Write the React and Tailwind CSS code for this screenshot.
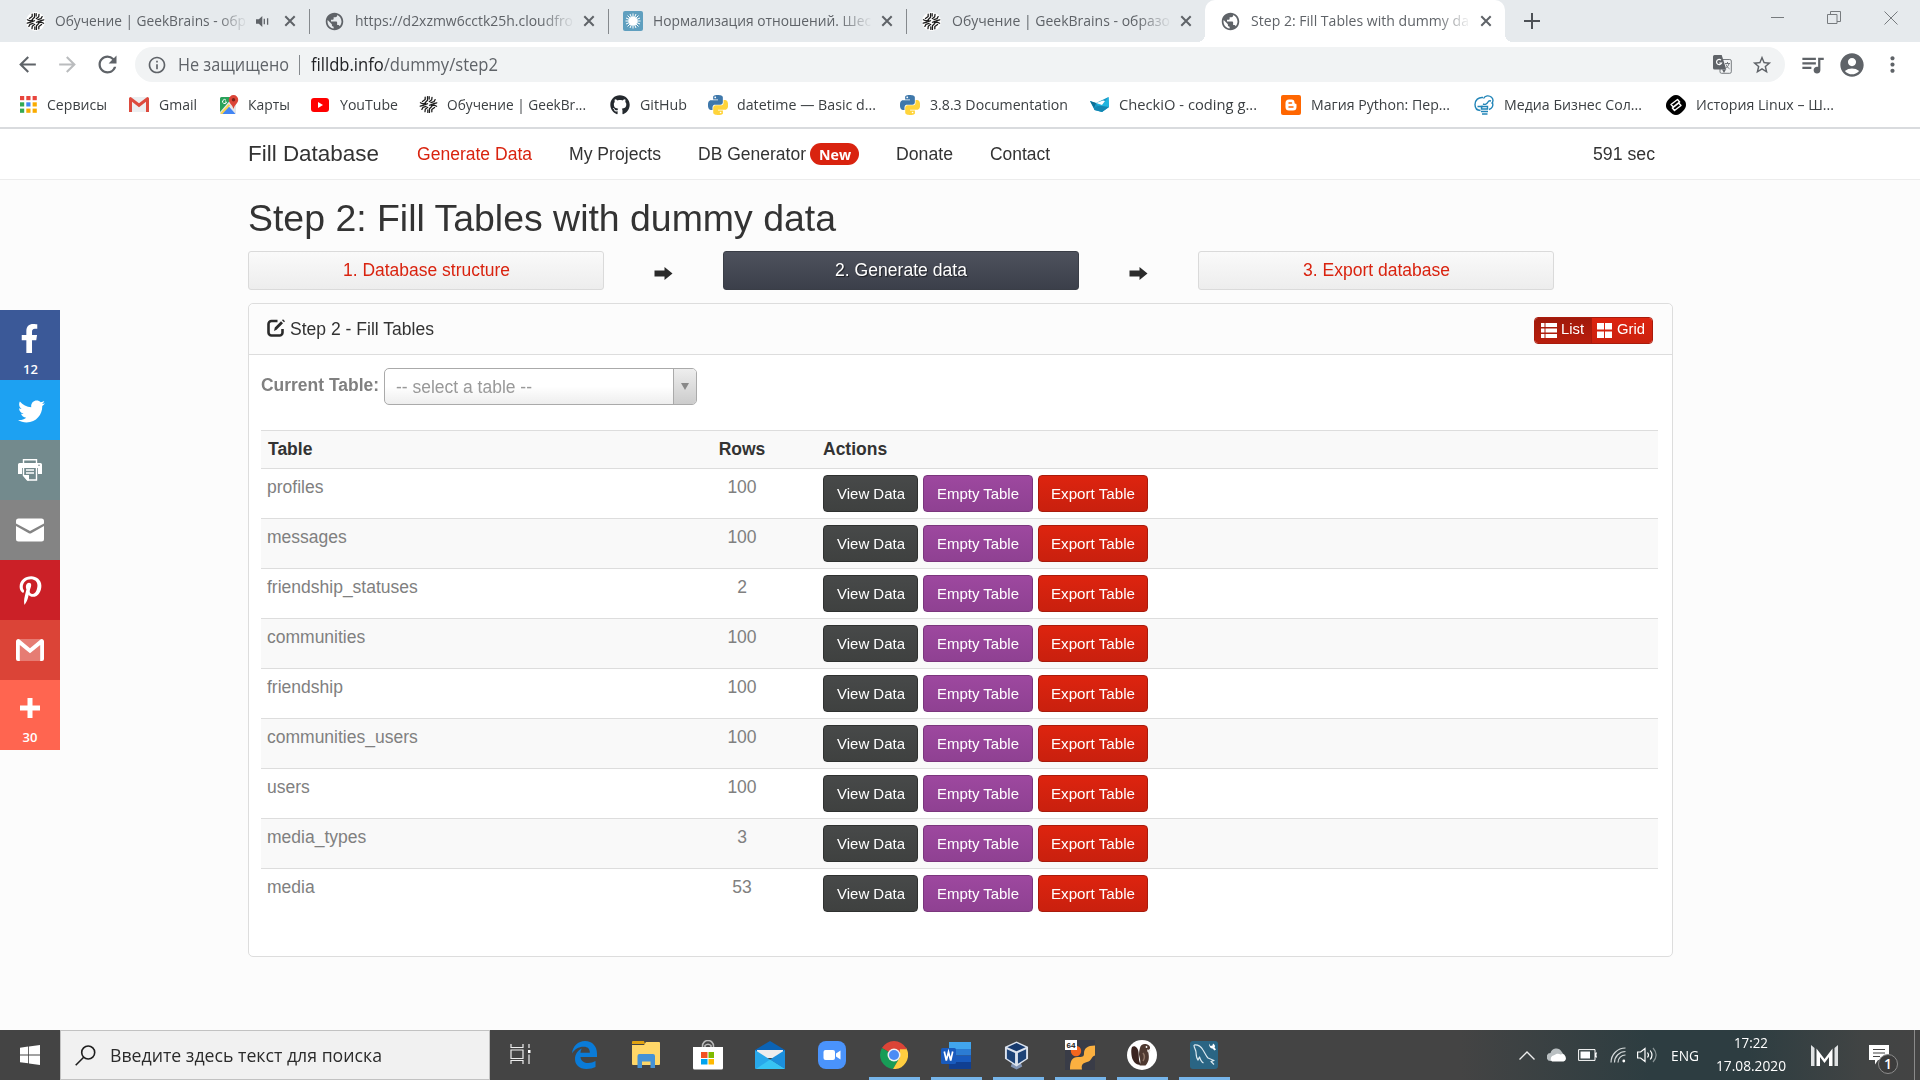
import React, { useLayoutEffect, useRef } from "react";
import { FaFacebookF, FaTwitter, FaPinterestP, FaGithub } from "react-icons/fa";
import { MdPublic, MdQueueMusic, MdAccountCircle, MdMoreVert, MdStarBorder, MdInfoOutline, MdArrowBack, MdArrowForward, MdRefresh } from "react-icons/md";

/* Single-line text condensed or widened to a given width. */
function Label({ w, className = "", children }) {
  const ref = useRef(null);
  useLayoutEffect(() => {
    const el = ref.current;
    el.style.transform = "none";
    const natural = el.getBoundingClientRect().width;
    el.style.transform = `scaleX(${w / natural})`;
  }, [w]);
  return (
    <span className={`block shrink-0 whitespace-nowrap ${className}`} style={{ width: w }}>
      <span ref={ref} className="inline-block origin-left">{children}</span>
    </span>
  );
}

function GeekBrains({ className = "" }) {
  return (
    <svg className={`shrink-0 ${className}`} width="19" height="19" viewBox="0 0 20 20">
      <circle cx="10" cy="10" r="10" fill="#fff" />
      <g fill="none" stroke="#1b1b1b" strokeWidth="1.35" strokeLinecap="round" strokeLinejoin="round">
        <path d="M9 1.600v4L6.600 7.800M6.500 2.300v2.500L3.600 6.800M1.500 8.200l2.600 1.200L7 8.500M1.300 11.800l3-.8L9 9.200M3 15.200l1.200-2.200L7.500 12M6.300 17.600l.3-2.600L9.200 13M9.300 15.800v2.600" />
        <path d="M11 18.400v-4l2.400-2.200M13.500 17.700v-2.500l2.900-2M18.500 11.800l-2.600-1.200-2.900.9M18.700 8.200l-3 .8L11 10.800M17 4.800L15.800 7l-3.300 1M13.700 2.400l-.3 2.600-2.600 2M10.700 4.200V1.600" />
      </g>
    </svg>
  );
}

function Python() {
  return (
    <svg className="shrink-0" width="20" height="20" viewBox="0 0 24 24">
      <path fill="#3f78ab" d="M14.25.18l.9.2.73.26.59.3.45.32.34.34.25.34.16.33.1.3.04.26.02.2-.01.13V8.5l-.05.63-.13.55-.21.46-.26.38-.3.31-.33.25-.35.19-.35.14-.33.1-.3.07-.26.04-.21.02H8.77l-.69.05-.59.14-.5.22-.41.27-.33.32-.27.35-.2.36-.15.37-.1.35-.07.32-.04.27-.02.21v3.06H3.17l-.21-.03-.28-.07-.32-.12-.35-.18-.36-.26-.36-.36-.35-.46-.32-.59-.28-.73-.21-.88-.14-1.05-.05-1.23.06-1.22.16-1.04.24-.87.32-.71.36-.57.4-.44.42-.33.42-.24.4-.16.36-.1.32-.05.24-.01h.16l.06.01h8.16v-.83H6.18l-.01-2.75-.02-.37.05-.34.11-.31.17-.28.25-.26.31-.23.38-.2.44-.18.51-.15.58-.12.64-.1.71-.06.77-.04.84-.02 1.27.05zm-6.3 1.98l-.23.33-.08.41.08.41.23.34.33.22.41.09.41-.09.33-.22.23-.34.08-.41-.08-.41-.23-.33-.33-.22-.41-.09-.41.09z" />
      <path fill="#ffd43b" d="M21.1 6.11l.28.06.32.12.35.18.36.27.36.35.35.47.32.59.28.73.21.88.14 1.04.05 1.23-.06 1.23-.16 1.04-.24.86-.32.71-.36.57-.4.45-.42.33-.42.24-.4.16-.36.09-.32.05-.24.02-.16-.01h-8.22v.82h5.84l.01 2.76.02.36-.05.34-.11.31-.17.29-.25.25-.31.24-.38.2-.44.17-.51.15-.58.13-.64.09-.71.07-.77.04-.84.01-1.27-.04-1.07-.14-.9-.2-.73-.25-.59-.3-.45-.33-.34-.34-.25-.34-.16-.33-.1-.3-.04-.25-.02-.2.01-.13v-5.34l.05-.64.13-.54.21-.46.26-.38.3-.32.33-.24.35-.2.35-.14.33-.1.3-.06.26-.04.21-.02.13-.01h5.84l.69-.05.59-.14.5-.21.41-.28.33-.32.27-.35.2-.36.15-.36.1-.35.07-.32.04-.28.02-.21V6.07h2.09z" />
      <circle cx="15.1" cy="21" r="1" fill="#fff" />
    </svg>
  );
}

function Close() {
  return (
    <svg className="shrink-0" width="12" height="12" viewBox="0 0 12 12" stroke="#5f6368" strokeWidth="2">
      <path d="M1.3 1.3l9.4 9.4M10.7 1.3L1.3 10.7" />
    </svg>
  );
}

function Sound() {
  return (
    <svg className="shrink-0" width="13" height="13" viewBox="0 0 13 13">
      <path d="M0 4.3h2.8L6.3 1v11L2.8 8.7H0z" fill="#5f6368" />
      <path d="M8.3 3.8v5.4M11.6 3.2v6.6" stroke="#5f6368" strokeWidth="1.3" />
    </svg>
  );
}

const globe = <MdPublic className="size-[21px] shrink-0 -mx-px text-[#5f6368]" />;
const habr = (
  <svg className="shrink-0" width="20" height="20" viewBox="0 0 20 20">
    <rect width="20" height="20" rx="2" fill="#5f9fbf" />
    <path d="M10 2.500v15M2.500 10h15M4.500 4.500l11 11M15.500 4.500l-11 11M7 3l6 14M13 3L7 17M3 7l14 6M17 7L3 13" stroke="#fff" strokeWidth="1" />
    <circle cx="10" cy="10" r="4.600" fill="#fff" />
  </svg>
);

const tabs = [
  { icon: <GeekBrains />, text: "Обучение | GeekBrains - обр", w: 191, cls: "w-[284px] ml-[26px]", sound: true, gap: "gap-[10px]" },
  { icon: globe, text: "https://d2xzmw6cctk25h.cloudfro", w: 218, cls: "w-[284px] ml-[15px]", gap: "gap-[11px]" },
  { icon: habr, text: "Нормализация отношений. Шес", w: 218, cls: "w-[284px] ml-[14px]", gap: "gap-[10px]" },
  { icon: <GeekBrains />, text: "Обучение | GeekBrains - образо", w: 218, cls: "w-[283px] ml-[15px] border-transparent", gap: "gap-[11px]" },
];

function Fade({ w, children }) {
  return (
    <Label w={w} className="-mt-[2px] text-[15px] leading-5 text-[#5f6368] [mask-image:linear-gradient(to_right,#000_85%,transparent_101%)]">
      {children}
    </Label>
  );
}

function TabStrip() {
  return (
    <div className="flex h-[42px] bg-[#e6eaed]">
      {tabs.map((t, i) => (
        <div key={i} className={`flex h-full shrink-0 items-center ${t.cls}`}>
          <div className={`flex items-center ${t.gap}`}>
            {t.icon}
            <Fade w={t.w}>{t.text}</Fade>
          </div>
          {t.sound && <span className="ml-[10px]"><Sound /></span>}
          <span className={t.sound ? "ml-[15px]" : "ml-[10px]"}><Close /></span>
          {i < 3 && <span className="ml-auto h-[25px] w-px bg-[#85898d]" />}
        </div>
      ))}
      <div className="relative flex h-full w-[300px] shrink-0 items-center rounded-t-[10px] bg-white pl-4">
        <span className="absolute -left-2 bottom-0 size-2 bg-[radial-gradient(circle_at_0_0,transparent_8px,#fff_8px)]" />
        <span className="absolute -right-2 bottom-0 size-2 bg-[radial-gradient(circle_at_100%_0,transparent_8px,#fff_8px)]" />
        <div className="flex items-center gap-[11px]">
          {globe}
          <Fade w={218}>Step 2: Fill Tables with dummy da</Fade>
        </div>
        <span className="ml-[11px]"><Close /></span>
      </div>
      <svg className="mt-[13px] ml-[19px] shrink-0" width="16" height="16" viewBox="0 0 16 16" stroke="#4d5156" strokeWidth="2"><path d="M8 0v16M0 8h16" /></svg>
      <div className="mr-[22px] ml-auto flex h-[35px] items-center gap-[43px]">
        <svg width="13" height="13" viewBox="0 0 13 13" stroke="#777b7e"><path d="M0 6.500h13" /></svg>
        <svg width="14" height="13" viewBox="0 0 14 13" fill="none" stroke="#777b7e"><path d="M.5 3.500h9.500v9H.5zM3.500 3.500v-3h10v10h-3.500" /></svg>
        <svg width="14" height="14" viewBox="0 0 14 14" stroke="#777b7e"><path d="M.5.5l13 13M13.500.5l-13 13" /></svg>
      </div>
    </div>
  );
}

function Toolbar() {
  return (
    <div className="flex h-[45px] items-center bg-white text-[#5f6368]">
      <MdArrowBack className="ml-[15px] size-[25px] shrink-0" />
      <MdArrowForward className="ml-[15px] size-[25px] shrink-0 text-[#babcbe]" />
      <MdRefresh className="ml-[14px] size-[27px] shrink-0" />
      <div className="ml-[14px] flex h-[35px] w-[1650px] shrink-0 items-center rounded-full bg-[#f1f3f4] text-[17.5px] leading-6">
        <MdInfoOutline className="ml-[12px] size-[20px] shrink-0" />
        <Label w={111} className="-mt-[2px] ml-[11px]">Не защищено</Label>
        <span className="ml-[10px] h-5 w-px bg-[#85898d]" />
        <Label w={187} className="-mt-[2px] ml-[11px]"><span className="text-[#202124]">filldb.info</span>/dummy/step2</Label>
        <svg className="ml-auto" width="19" height="19" viewBox="0 0 19 19">
          <rect x="7" y="4.500" width="11.300" height="13.800" rx="1.500" fill="#f1f3f4" stroke="#777b7f" />
          <path d="M1.500 0h7.200l4.600 14.500H1.500A1.500 1.500 0 0 1 0 13V1.500A1.500 1.500 0 0 1 1.500 0z" fill="#5f6368" />
          <path d="M8 5.100A2.600 2.600 0 1 0 8.600 8H6.200" fill="none" stroke="#fff" strokeWidth="1.200" />
          <path d="M12 8.500h5M14.500 7v1.500M16 8.500c-.5 2.500-2 4-4 5M13 9.500c.8 2 2 3.500 3.500 4.300" fill="none" stroke="#777b7f" />
          <path d="M9 14.500l2 3.500 2-3.500z" fill="#5f6368" />
        </svg>
        <MdStarBorder className="mr-[12px] ml-[19px] size-[22px]" />
      </div>
      <MdQueueMusic className="ml-[14px] size-[27px] shrink-0" />
      <MdAccountCircle className="ml-[12px] size-[28px] shrink-0" />
      <MdMoreVert className="ml-[14px] size-[25px] shrink-0" />
    </div>
  );
}

const appsGrid = (
  <svg className="shrink-0" width="17" height="17" viewBox="0 0 17 17">
    {["#e8453c", "#e8453c", "#e8453c", "#34a853", "#4285f4", "#f9ab00", "#34a853", "#f9ab00", "#f9ab00"].map((c, i) => (
      <rect key={i} x={(i % 3) * 6.300} y={Math.floor(i / 3) * 6.300} width="4.200" height="4.200" fill={c} />
    ))}
  </svg>
);
const gmail = (
  <svg className="shrink-0" width="20" height="15" viewBox="0 0 20 15">
    <path d="M2 0h16v15H2z" fill="#eceff1" />
    <path d="M0 1.500V15h3V4.800l7 5.400 7-5.400V15h3V1.500A1.500 1.500 0 0 0 17.600.4L10 6.200 2.400.4A1.500 1.500 0 0 0 0 1.500z" fill="#dd4b3e" />
  </svg>
);
const maps = (
  <svg className="shrink-0" width="19" height="19" viewBox="0 0 19 19">
    <rect x="0" y="2" width="16" height="17" rx="1.500" fill="#e4e6e8" />
    <path d="M0 3.500A1.500 1.500 0 0 1 1.500 2H13L0 17z" fill="#29a25a" />
    <path d="M8 10.500L15.500 19H1z" fill="#4285f4" />
    <path d="M1 19L9.500 9.800" stroke="#fbd34f" strokeWidth="2" />
    <path d="M13.500 0a4.700 4.700 0 0 1 4.700 4.700c0 3.300-3.500 4.700-4.700 9.300-1.200-4.600-4.700-6-4.700-9.300A4.700 4.700 0 0 1 13.500 0z" fill="#db4437" />
    <circle cx="13.500" cy="4.700" r="1.700" fill="#7b231b" />
    <path d="M6 5.200A2 2 0 1 0 6.500 7H5" fill="none" stroke="#fff" />
  </svg>
);
const youtube = (
  <svg className="shrink-0" width="18" height="14" viewBox="0 0 18 14"><rect width="18" height="14" rx="3" fill="#f00" /><path d="M7 4l5 3-5 3z" fill="#fff" /></svg>
);
const checkio = (
  <svg className="shrink-0" width="20" height="15" viewBox="0 0 20 15">
    <path d="M0 4l6 2L18.500 0l.5 10-7 5-7.500-2z" fill="#1998c5" /><path d="M6 6l6 2 6.500-8L19 10H9z" fill="#1fb5e0" /><path d="M0 4l6 2-2 5z" fill="#0a6f96" /><path d="M4 11l5-2.500L19 10l-7 5-7.500-2z" fill="#1287b3" /><path d="M6 6l6 2 3-4-2-.5z" fill="#fff" />
  </svg>
);
const blogger = (
  <svg className="shrink-0" width="20" height="20" viewBox="0 0 20 20">
    <rect width="20" height="20" rx="2" fill="#f60" />
    <path d="M8 4.500h2.500A3 3 0 0 1 13.500 7.500c0 1 .5 1.200 1.200 1.200.6 0 .8.500.8 1V12a3.500 3.500 0 0 1-3.500 3.500H8A3.500 3.500 0 0 1 4.500 12V8A3.500 3.500 0 0 1 8 4.500z" fill="#fff" />
    <path d="M8 8h2.500M8 12h4" stroke="#f60" strokeWidth="1.500" strokeLinecap="round" />
  </svg>
);
const bulb = (
  <svg className="shrink-0" width="20" height="20" viewBox="0 0 20 20" fill="none" stroke="#2285b8" strokeWidth="1.400">
    <path d="M6.500 15.500C3 15.500 1 13 1 9.500 1 5 4.500 2 9 2.500M9.500 3.500C11 .5 15 0 17.500 2.200c2 1.800 2 4.800 0 6.300M15 14.500c3-1 4.500-3.500 3.500-6.500" />
    <path d="M9 9c2 1 4 0 5-2 .5-1 1.500-1.500 3-1M3.500 11.500H9" />
    <path d="M7.500 11.500h6v2.500h-6zM7 16.500h7M8 19h5.500" />
  </svg>
);
const stepik = (
  <svg className="shrink-0" width="20" height="20" viewBox="0 0 20 20">
    <path d="M10 0c3 0 4 1.500 7 4s3 4 3 6-1 4-3 6-4 4-7 4-4-1.500-7-4-3-4-3-6 1-4 3-6 4-4 7-4z" fill="#000" />
    <path d="M14 7.500L11.500 4.500 5 9.500l2.500 2.700 5-4M6 12.500l2.500 3 6.500-5-2.500-2.700-5 4" fill="none" stroke="#fff" strokeWidth="1.400" strokeLinejoin="round" />
  </svg>
);

const bookmarks = [
  [appsGrid, "Сервисы", 60, "w-[109px] gap-[10px]"],
  [gmail, "Gmail", 38, "w-[91px] gap-[10px]"],
  [maps, "Карты", 42, "w-[91px] gap-[9px]"],
  [youtube, "YouTube", 58, "w-[108px] gap-[11px]"],
  [<GeekBrains />, "Обучение | GeekBr...", 139, "w-[191px] gap-[9px]"],
  [<FaGithub className="size-[20px] shrink-0 text-[#24292e]" />, "GitHub", 47, "w-[98px] gap-[10px]"],
  [<Python />, "datetime — Basic d...", 139, "w-[192px] gap-[9px]"],
  [<Python />, "3.8.3 Documentation", 138, "w-[190px] gap-[10px]"],
  [checkio, "CheckiO - coding g...", 138, "w-[191px] gap-[9px]"],
  [blogger, "Магия Python: Пер...", 139, "w-[193px] gap-[10px]"],
  [bulb, "Медиа Бизнес Сол...", 138, "w-[192px] gap-[10px]"],
  [stepik, "История Linux – Ш...", 138, "w-[192px] gap-[10px]"],
];

function Bookmarks() {
  return (
    <div className="flex h-[42px] items-center border-b-2 border-[#d9dbde] bg-white pb-[5px] pl-5">
      {bookmarks.map(([icon, text, w, cls], i) => (
        <div key={i} className={`flex shrink-0 items-center ${cls}`}>
          {icon}
          <Label w={w} className="-mt-[2px] text-[15px] leading-5 text-[#3c4043]">{text}</Label>
        </div>
      ))}
    </div>
  );
}

function SiteNav() {
  return (
    <div className="h-[51px] border-b border-[#ececec] bg-white">
      <div className="ml-[248px] flex h-[50px] w-[1407px] items-center text-[17.500px] leading-6 text-[#333] font-['Liberation_Sans',sans-serif]">
        <Label w={131} className="text-[22.500px]">Fill Database</Label>
        <Label w={115} className="ml-[38px] text-[#d9230f]">Generate Data</Label>
        <Label w={92} className="ml-[37px]">My Projects</Label>
        <Label w={108} className="ml-[37px]">DB Generator</Label>
        <span className="ml-[4px] flex h-[22px] w-[49px] items-center justify-center rounded-full bg-[#d9230f] pt-px font-['Open_Sans',sans-serif] text-[14px] font-bold text-white">
          <Label w={32}>New</Label>
        </span>
        <Label w={57} className="ml-[37px]">Donate</Label>
        <Label w={60} className="ml-[37px]">Contact</Label>
        <Label w={62} className="ml-auto">591 sec</Label>
      </div>
    </div>
  );
}

function ShareRail() {
  const cell = "flex w-[60px] items-center justify-center text-white";
  return (
    <aside className="mt-[130px] flex w-[60px] shrink-0 flex-col font-['Open_Sans',sans-serif] text-[13px] font-semibold leading-4">
      <div className={`${cell} h-[70px] flex-col bg-[#3b5998] pt-[10px]`}>
        <FaFacebookF className="-ml-[2px] size-[29px]" />
        <span className="mt-[8px] ml-px">12</span>
      </div>
      <div className={`${cell} h-[60px] bg-[#1da1f2]`}><FaTwitter className="mt-[2px] ml-[3px] size-[27px]" /></div>
      <div className={`${cell} h-[60px] bg-[#738a8d]`}>
        <svg width="24" height="22" viewBox="0 0 24 22" fill="none">
          <path d="M5.500 4.500V.7h13v3.800" stroke="#fff" strokeWidth="1.400" />
          <path d="M0 5.500A1.500 1.500 0 0 1 1.500 4h21A1.500 1.500 0 0 1 24 5.500V15h-4V9H4v6H0z" fill="#fff" />
          <path d="M5.500 9v7.500l4 4.500h9V9" stroke="#fff" strokeWidth="1.400" />
          <path d="M8 11h8M8 14h8" stroke="#fff" strokeWidth="1.300" />
          <path d="M5 16h6v5.500h-1.500z" fill="#fff" /><circle cx="21" cy="6.300" r=".8" fill="#738a8d" />
        </svg>
      </div>
      <div className={`${cell} h-[60px] bg-[#848484]`}>
        <svg width="28" height="24" viewBox="0 0 28 24" fill="#fff">
          <path d="M2.500.5h23A2.500 2.500 0 0 1 28 3v2.400L14 13 0 5.400V3A2.500 2.500 0 0 1 2.500.5z" /><path d="M0 8l12.800 7.200a2.500 2.500 0 0 0 2.400 0L28 8v13a2.500 2.500 0 0 1-2.500 2.500h-23A2.500 2.500 0 0 1 0 21z" />
        </svg>
      </div>
      <div className={`${cell} h-[60px] bg-[#cb2027]`}><FaPinterestP className="size-[29px]" /></div>
      <div className={`${cell} h-[60px] bg-[#db4437]`}>
        <svg width="28" height="22" viewBox="0 0 28 22">
          <path d="M3 0h22v22H3z" fill="#fff" opacity=".3" />
          <path d="M0 2.500V20a2 2 0 0 0 2 2h1.800V6L14 14.300 24.200 6v16H26a2 2 0 0 0 2-2V2.500C28 .3 25.700-.6 24.200.7L14 9.300 3.800.7C2.300-.6 0 .3 0 2.500z" fill="#fff" />
        </svg>
      </div>
      <div className={`${cell} h-[70px] flex-col bg-[#ff6550] pt-[13px]`}>
        <svg width="20" height="20" viewBox="0 0 20 20" stroke="#fff" strokeWidth="5"><path d="M10 0v20M0 10h20" /></svg>
        <span className="mt-[11px]">30</span>
      </div>
    </aside>
  );
}

function Arrow() {
  return (
    <svg className="mt-[5px] shrink-0" width="19" height="13" viewBox="0 0 19 13"><path d="M.5 3.500h10V0l8 6.500-8 6.500V9.500h-10z" fill="#2b2b2b" /></svg>
  );
}

function Steps() {
  const base = "flex h-[39px] w-[356px] shrink-0 items-center justify-center rounded-[3px] border pb-px";
  const light = "border-[#dadada] bg-linear-to-b from-[#fafafa] to-[#ededed] text-[#d9230f]";
  return (
    <div className="mt-[12px] flex items-center gap-[50px] text-[17.500px]">
      <div className={`${base} ${light}`}><Label w={167}>1. Database structure</Label></div>
      <Arrow />
      <div className={`${base} border-[#3a3e47] bg-linear-to-b from-[#4e525d] to-[#3b3f4a] text-white [text-shadow:1px_1px_1px_rgba(0,0,0,.6)]`}><Label w={132}>2. Generate data</Label></div>
      <Arrow />
      <div className={`${base} ${light}`}><Label w={147}>3. Export database</Label></div>
    </div>
  );
}

const rows = [
  ["profiles", 100], ["messages", 100], ["friendship_statuses", 2], ["communities", 100], ["friendship", 100],
  ["communities_users", 100], ["users", 100], ["media_types", 3], ["media", 53],
];

function Row({ name, count, odd }) {
  const btn = "flex h-[37px] items-center justify-center rounded-[4px] border text-[15px] text-white bg-linear-to-b";
  return (
    <div className={`flex h-[50px] border-t border-[#dddddd] ${odd ? "bg-[#f9f9f9]" : "bg-white"}`}>
      <div className="w-[440px] shrink-0 pt-[6px] pl-[6px] text-[#808080]">{name}</div>
      <div className="w-[82px] shrink-0 pt-[6px] text-center text-[#808080]">{count}</div>
      <div className="ml-[40px] flex gap-[5px] pt-[6px]">
        <div className={`${btn} w-[95px] border-[#2f3130] from-[#474949] to-[#3f4140]`}><Label w={68}>View Data</Label></div>
        <div className={`${btn} w-[110px] border-[#7b367d] from-[#9d489f] to-[#8f4192]`}><Label w={82}>Empty Table</Label></div>
        <div className={`${btn} w-[110px] border-[#a91b0c] from-[#dd240f] to-[#c9200e]`}><Label w={84}>Export Table</Label></div>
      </div>
    </div>
  );
}

function Panel() {
  return (
    <section className="mt-[13px] h-[654px] w-[1425px] rounded-[5px] border border-[#dddddd] bg-white">
      <header className="flex h-[51px] items-center rounded-t-[5px] border-b border-[#dddddd] bg-[#fcfcfc] pr-[19px] pl-[18px] text-[17.500px]">
        <svg className="mb-[3px] shrink-0" width="18" height="18" viewBox="0 0 18 18">
          <path d="M10.500 2H4.500A3 3 0 0 0 1.500 5v8.500a3 3 0 0 0 3 3h8a3 3 0 0 0 3-3V10" fill="none" stroke="#2b2b2b" strokeWidth="2.600" />
          <path d="M7 12l.8-3.400L14 2.200l2 2-6.400 6.600zM15 1.200l1-1 2 2-1 1z" fill="#2b2b2b" />
        </svg>
        <Label w={144} className="ml-[5px] text-[#333]">Step 2 - Fill Tables</Label>
        <div className="mt-[2px] ml-auto flex h-[27px] overflow-hidden rounded-[4px] border border-[#a91b0c] text-[15px] text-white">
          <div className="flex w-[56px] items-center bg-linear-to-b from-[#a01a0b] to-[#b91e0d] pl-[6px]">
            <svg width="16" height="15" viewBox="0 0 16 15" fill="#fff"><path d="M0 0h3.500v4H0zM4.500 0H16v4H4.500zM0 5.500h3.500v4H0zM4.500 5.500H16v4H4.500zM0 11h3.500v4H0zM4.500 11H16v4H4.500z" /></svg>
            <Label w={23} className="ml-[4px] pb-px">List</Label>
          </div>
          <div className="flex w-[61px] items-center border-l border-[#a91b0c] bg-linear-to-b from-[#dd240f] to-[#cb210e] pl-[5px]">
            <svg width="15" height="15" viewBox="0 0 15 15" fill="#fff"><path d="M0 0h7v6.500H0zM8 0h7v6.500H8zM0 8.500h7V15H0zM8 8.500h7V15H8z" /></svg>
            <Label w={28} className="ml-[5px] pb-px">Grid</Label>
          </div>
        </div>
      </header>
      <div className="px-[12px] pt-[13px] text-[17.500px] leading-[25px]">
        <div className="flex">
          <Label w={118} className="pt-[5px] font-bold text-[#808080]">Current Table:</Label>
          <div className="ml-[5px] flex h-[37px] w-[313px] overflow-hidden rounded-[5px] border border-[#aaaaaa] bg-linear-to-b from-white from-50% to-[#eeeeee] text-[#999]">
            <Label w={136} className="mt-[6px] ml-[11px]">-- select a table --</Label>
            <div className="ml-auto flex w-[23px] items-center justify-center border-l border-[#aaaaaa] bg-linear-to-b from-[#eeeeee] to-[#cccccc]">
              <svg width="8" height="7" viewBox="0 0 8 7"><path d="M0 0h8L4 7z" fill="#888" /></svg>
            </div>
          </div>
        </div>
        <div className="mt-[25px] w-[1397px]">
          <div className="flex h-[38px] border-t border-[#dddddd] bg-[#f9f9f9] font-bold text-[#333]">
            <div className="w-[440px] pt-[6px] pl-[7px]">Table</div>
            <div className="w-[82px] pt-[6px] text-center">Rows</div>
            <div className="ml-[40px] pt-[6px]">Actions</div>
          </div>
          {rows.map(([name, count], i) => <Row key={name} name={name} count={count} odd={i % 2 === 1} />)}
        </div>
      </div>
    </section>
  );
}

const taskIcons = [
  <svg width="25" height="28" viewBox="0 0 25 28"><path d="M0 12.500C.8 5 6 0 13 0c7.500 0 12 5.500 12 12.500V16H8.500c.3 4.200 4 6 7.500 6 3 0 5.300-.8 7.500-2v6c-2.500 1.300-5.500 2-9 2C7 28 3 23.500 3 18c0-4.500 2.500-8.500 7-10.500C8.800 9 8.500 10.500 8.500 11.800h9.300c0-4-2-6-6-6C6.500 5.800 2.500 8.500 0 12.500z" fill="#0a7bd8" /></svg>,
  <svg width="28" height="28" viewBox="0 0 28 28"><path d="M0 1a1 1 0 0 1 1-1h11l1 3H0z" fill="#e0a210" /><path d="M0 4h12l2-3h13a1 1 0 0 1 1 1v21a1 1 0 0 1-1 1H1a1 1 0 0 1-1-1z" fill="#ffd768" /><path d="M5.500 27V15a2 2 0 0 1 2-2h13.500a2 2 0 0 1 2 2v12h-4.500v-6.500h-8.500V27z" fill="#4592d6" /></svg>,
  <svg width="30" height="30" viewBox="0 0 30 30"><path d="M9.500 8V6a5.500 5.500 0 0 1 11 0v2M12 8V5.500a4.500 4.500 0 0 1 6 0V8" fill="none" stroke="#bbb" strokeWidth="1.500" /><path d="M0 7h30v21a1.500 1.500 0 0 1-1.500 1.500h-27A1.500 1.500 0 0 1 0 28z" fill="#fff" /><path d="M8 12h6.500v6H8z" fill="#f25022" /><path d="M15.500 12H21v6h-5.500z" fill="#7fba00" /><path d="M8 19h6.500v5.500H8z" fill="#00a4ef" /><path d="M15.500 19H21v5.500h-5.500z" fill="#ffb900" /></svg>,
  <svg width="30" height="28" viewBox="0 0 30 28"><path d="M0 9L15 0l15 9v2H0z" fill="#0b63b5" /><path d="M2 9h26v8H2z" fill="#ededed" /><path d="M0 9l30 19H1a1 1 0 0 1-1-1z" fill="#28a8ea" /><path d="M30 9L15 18.500 30 28z" fill="#1b8fdc" /><path d="M15 18.500L30 28H1z" fill="#37c4f4" /></svg>,
  <svg width="28" height="28" viewBox="0 0 28 28"><rect width="28" height="28" rx="8" fill="#4a93fb" /><rect x="5.500" y="9" width="11.500" height="10" rx="2" fill="#fff" /><path d="M18 12.500l4.500-3v9l-4.500-3z" fill="#fff" /></svg>,
  <svg width="28" height="28" viewBox="0 0 28 28"><path d="M14 14L1.900 7A14 14 0 0 1 26.100 7z" fill="#db4437" /><path d="M14 14L1.900 7A14 14 0 0 0 13 28l6-10z" fill="#189c57" /><path d="M26.100 7A14 14 0 0 1 13 28l6.500-11L20 7z" fill="#ffcd40" /><path d="M14 7.500h12.400" stroke="#db4437" strokeWidth="1.500" /><circle cx="14" cy="14" r="6.500" fill="#f1f1f1" /><circle cx="14" cy="14" r="5" fill="#4c8bf5" /></svg>,
  <svg width="30" height="27" viewBox="0 0 30 27"><path d="M8 0h22v7H8z" fill="#41a5ee" /><path d="M8 7h22v6.500H8z" fill="#2b7cd3" /><path d="M8 13.500h22V20H8z" fill="#185abd" /><path d="M8 20h22v7H8z" fill="#103f91" /><rect y="6" width="15" height="16" rx="1.500" fill="#185abd" /><path d="M3.300 9.500l2 9 2.200-8.500 2.200 8.500 2-9" fill="none" stroke="#fff" strokeWidth="1.700" /></svg>,
  <svg className="-ml-[3px]" width="25" height="29" viewBox="0 0 26 29"><path d="M9 21l8 0 2 5-6 3-6-3z" fill="#8295b5" /><path d="M13 0l12 5.500V18L13 26 1 18V5.500z" fill="#dce3ee" /><path d="M13 1.500L22.500 6 13 10 3.500 6z" fill="#173a6e" /><path d="M3 8l8.500 4v11L3 17.500zM23 8l-8.500 4v11l8.500-5.500z" fill="#1d4377" /></svg>,
  <svg width="30" height="30" viewBox="0 0 30 30"><rect width="30" height="30" fill="#393c47" /><path d="M30 5.500c-8 0-11 3-11 8 0 3.500-2 3.500-6 3.500-6 0-8 4-8 12.500h12c-1-5 1-6.500 5-7.500 5-1 4-5.500 8-6.500z" fill="#fbb040" /><circle cx="11" cy="11" r="5.200" fill="#f4661e" /><rect width="12" height="10" fill="#fff" /><text x="6" y="8" textAnchor="middle" fontSize="8" fontWeight="700" fontFamily="Liberation Sans" fill="#222">64</text></svg>,
  <svg width="30" height="30" viewBox="0 0 30 30"><circle cx="15" cy="15" r="15" fill="#fff" /><path d="M5 7c3-2 6 1 6.500 5 .5 5 0 9 2.500 13-6 0-9-5-9.500-10-.300-3-.5-6 .5-8z" fill="#3a2420" /><path d="M13 8c.5-3 3-4.500 6-4 3 .5 4.500 2.500 4 4.500-1 1.500-2 2-1.500 5s1 8-3 12h-6c2-3 0-8-.5-11 0-2.500.5-4.500 1-6.500z" fill="#4e3930" /><path d="M16 13c1.500 2 2 5 0 8" stroke="#8c7263" strokeWidth="1.500" fill="none" /><path d="M20 9.500l3.500.5-1 3-2-1z" fill="#e9e4e0" /><circle cx="19.500" cy="7" r=".9" fill="#fff" /></svg>,
  <svg width="28" height="28" viewBox="0 0 28 28"><rect width="28" height="28" rx="3" fill="#2a6584" /><path d="M4 4c4-.5 7 1.500 9 5 2 3 3 6 5 8 2 1 4 1.500 6 2.500l-3 1 3 3M4 4c0 3 1.500 4 2 7 .3 3 0 6 2 8l1.500-3c1 3 2 5 4 6" fill="none" stroke="#dbe9f0" strokeWidth="1.200" strokeLinejoin="round" /><path d="M19 2.500l1.500 2.500 2-.5.5-2c2 1 2.500 3 1.500 4l1.500 2-1.500 1-2-2c-2 0-3.500-2-3.500-5z" fill="#fff" /></svg>,
];

function Taskbar() {
  return (
    <footer className="flex h-[50px] items-center bg-[linear-gradient(to_right,#444_0%,#444_76%,#2d3d41_86%,#2d3d41_91%,#414444_97%,#444_100%)] text-white">
      <div className="flex w-[60px] shrink-0 justify-center">
        <svg width="20" height="20" viewBox="0 0 20 20" fill="#fff"><path d="M0 2.800l8.200-1.200v7.900H0zM9 1.500L20 0v9.500H9zM0 10.400h8.200v7.900L0 17.200zM9 10.400h11V20L9 18.500z" /></svg>
      </div>
      <div className="flex h-full w-[430px] shrink-0 items-center border border-[#c2c2c2] bg-[#f1f1f1]">
        <svg className="ml-[14px] shrink-0" width="21" height="21" viewBox="0 0 21 21" fill="none" stroke="#1e1e1e" strokeWidth="1.600"><circle cx="13.200" cy="7.500" r="6.500" /><path d="M8.700 12.200L.7 20.200" /></svg>
        <Label w={272} className="ml-[14px] text-[18.500px] leading-6 text-[#2b2b2b]">Введите здесь текст для поиска</Label>
      </div>
      <svg className="-mt-[2px] ml-[20px] shrink-0" width="22" height="20" viewBox="0 0 22 20" fill="none" stroke="#eee" strokeWidth="1.200"><path d="M1 0v3.500h12V0M1 6h12v8.500H1zM1 20v-3.500h12V20M19 0v4M19 10.500V20" /><rect x="18" y="6" width="2.500" height="3" fill="#fff" stroke="none" /></svg>
      <div className="ml-[21px] flex h-full">
        {taskIcons.map((icon, i) => (
          <div key={i} className="flex h-full w-[62px] flex-col items-center">
            <div className="flex h-[47px] items-center pt-[3px]">{icon}</div>
            {i >= 5 && <div className="h-[3px] w-[51px] bg-[#76b5ea]" />}
          </div>
        ))}
      </div>
      <div className="ml-auto flex h-full items-center">
        <svg className="shrink-0" width="16" height="9" viewBox="0 0 16 9" fill="none" stroke="#eee" strokeWidth="1.400"><path d="M.5 8.500L8 1l7.500 7.500" /></svg>
        <svg className="-mt-px ml-[12px] shrink-0" width="20" height="14" viewBox="0 0 20 14"><path d="M4 13a4 4 0 0 1-.5-8 6 6 0 0 1 11-1.500L17 7z" fill="#b9bfc1" /><path d="M5 13.500a3.500 3.500 0 0 1 2-6.200c2-2 5-2 6.500-.8a3.800 3.800 0 0 1 3 7z" fill="#fff" /></svg>
        <svg className="ml-[11px] shrink-0" width="19" height="12" viewBox="0 0 19 12"><path d="M.6.600h16.400v10.800H.6zM17.500 4H19v4h-1.500z" fill="none" stroke="#fff" /><path d="M2.500 2.500h9.500v7H2.500z" fill="#fff" /></svg>
        <svg className="ml-[13px] shrink-0" width="16" height="16" viewBox="0 0 16 16" fill="none" stroke="#d5dadb" strokeWidth="1.200"><path d="M1 15.500A14.500 14.500 0 0 1 15.500 1M4.500 15.500a11 11 0 0 1 11-11M8 15.500A7.500 7.500 0 0 1 15.500 8" /><circle cx="13.800" cy="14" r="1.400" fill="#fff" stroke="none" /></svg>
        <svg className="ml-[11px] shrink-0" width="21" height="18" viewBox="0 0 21 18" fill="none" stroke="#fff" strokeWidth="1.200"><path d="M.6 6h3L8 2.500v13L3.600 12h-3zM10.500 6.500c1.200 1.500 1.200 3.500 0 5M13.200 4.500c2.200 2.800 2.200 6.200 0 9" /><path d="M16 2c4 4.500 4 9.500 0 14" stroke="#8a9496" /></svg>
        <Label w={28} className="ml-[13px] text-[15px] leading-5">ENG</Label>
        <div className="-mt-[3px] ml-[17px] mr-px flex w-[70px] flex-col items-center gap-[3px] text-[15px] leading-5">
          <Label w={34}>17:22</Label>
          <Label w={70}>17.08.2020</Label>
        </div>
        <svg className="ml-[24px] shrink-0" width="27" height="21" viewBox="0 0 27 21"><path d="M0 0l3.500 3v18H0zM27 0l-3.500 3v18H27z" fill="#dfe2e3" /><path d="M5.500 3.500L13.500 14l8-10.500V21H18v-9l-4.500 6L9 12v9H5.500z" fill="#fff" /></svg>
        <div className="relative ml-[31px] shrink-0">
          <svg width="20" height="20" viewBox="0 0 20 20"><path d="M0 0h20v15H9l-3 4.500V15H0z" fill="#fff" /><path d="M4 4.500h12M4 8h12M4 11.500h7" stroke="#444" strokeWidth="1.200" /></svg>
          <span className="absolute top-[9px] left-[9px] flex size-[20px] items-center justify-center rounded-full border border-[#8d8d8d] bg-[#3c3c3c] text-[14px] font-semibold leading-none">1</span>
        </div>
        <span className="mr-[5px] ml-[25px] h-full w-px bg-[#8a8a8a]" />
      </div>
    </footer>
  );
}

export default function App() {
  return (
    <div className="flex h-[1080px] w-[1920px] flex-col overflow-hidden bg-[#fcfcfc] font-['Open_Sans','Noto_Sans',sans-serif]">
      <TabStrip />
      <Toolbar />
      <Bookmarks />
      <SiteNav />
      <main className="flex h-[850px] font-['Liberation_Sans',Arial,sans-serif]">
        <ShareRail />
        <div className="ml-[188px] w-[1425px] pt-[18px]">
          <h1 className="text-[37.500px] leading-[41px] text-[#333]"><Label w={588}>Step 2: Fill Tables with dummy data</Label></h1>
          <Steps />
          <Panel />
        </div>
      </main>
      <Taskbar />
    </div>
  );
}
